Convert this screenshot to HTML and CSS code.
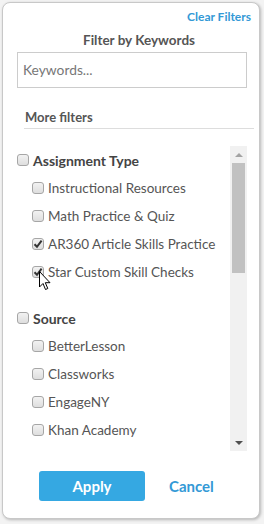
FILE: index.html
```html
<!DOCTYPE html>
<html>
<head>
<meta charset="utf-8">
<link rel="stylesheet" href="styles.css">
</head>
<body>
<div class="modal">
  <div class="clear-row"><a class="link clear">Clear Filters</a></div>
  <div class="title">Filter by Keywords</div>
  <div class="input">Keywords...</div>
  <div class="section">More filters</div>
  <div class="list">
    <div class="list-content">
      <div class="group">
        <div class="row head"><span class="cb"></span>Assignment Type</div>
        <div class="row child"><span class="cb"></span>Instructional Resources</div>
        <div class="row child"><span class="cb"></span>Math Practice &amp; Quiz</div>
        <div class="row child"><span class="cb checked"><svg viewBox="0 0 12 12" width="12" height="12"><path d="M2.5 6.2 L5 8.8 L9.6 2.6" fill="none" stroke="#333" stroke-width="2"/></svg></span>AR360 Article Skills Practice</div>
        <div class="row child"><span class="cb checked"><svg viewBox="0 0 12 12" width="12" height="12"><path d="M2.5 6.2 L5 8.8 L9.6 2.6" fill="none" stroke="#333" stroke-width="2"/></svg></span>Star Custom Skill Checks</div>
      </div>
      <div class="group">
        <div class="row head"><span class="cb"></span>Source</div>
        <div class="row child"><span class="cb"></span>BetterLesson</div>
        <div class="row child"><span class="cb"></span>Classworks</div>
        <div class="row child"><span class="cb"></span>EngageNY</div>
        <div class="row child"><span class="cb"></span>Khan Academy</div>
        <div class="row child"><span class="cb"></span></div>
      </div>
    </div>
    <div class="scrollbar">
      <div class="sb-btn"><span class="arrow up"></span></div>
      <div class="sb-track"><div class="sb-thumb"></div></div>
      <div class="sb-btn"><span class="arrow down"></span></div>
    </div>
  </div>
  <div class="footer">
    <button class="apply">Apply</button>
    <button class="cancel">Cancel</button>
  </div>
</div>
<svg class="cursor" width="13" height="20" viewBox="0 0 13 20"><path d="M0.5 0.5 L0.5 16 L4 12.5 L6.5 18.5 L8.8 17.5 L6.3 11.7 L11 11.7 Z" fill="#fff" stroke="#000" stroke-width="1" stroke-linejoin="miter"/></svg>
</body>
</html>
```
FILE: styles.css
```css
* { box-sizing: border-box; }
html, body { margin: 0; padding: 0; }
body {
  width: 264px;
  height: 524px;
  background: #f3f3f3;
  font-family: Lato, "Liberation Sans", sans-serif;
  position: relative;
  overflow: hidden;
}
.modal {
  margin: 2px 0 0 2px;
  width: 258px;
  height: 517px;
  background: #fff;
  border: 1px solid #c8c8c8;
  border-radius: 8px;
  box-shadow: 1px 1px 3px rgba(0,0,0,0.25);
  display: flex;
  flex-direction: column;
}
.clear-row {
  padding: 4px 8px 0 0;
  text-align: right;
  line-height: 16px;
}
.link {
  color: #3399d6;
  font-weight: 700;
  font-size: 12px;
}
.title {
  margin-top: 6px;
  padding-left: 16px;
  text-align: center;
  font-weight: 700;
  font-size: 13.5px;
  line-height: 18px;
  color: #555;
}
.input {
  margin: 3px 0 0 14px;
  width: 230px;
  height: 36px;
  border: 1px solid #cccccc;
  padding-left: 5px;
  line-height: 34px;
  font-size: 13.8px;
  color: #777;
}
.section {
  margin: 21px 5px 0 21px;
  padding: 0 0 3px 1px;
  line-height: 16px;
  font-weight: 700;
  font-size: 13px;
  color: #555;
  border-bottom: 1px solid #dddddd;
}
.list {
  margin: 17px 0 0 13px;
  width: 231px;
  height: 305px;
  display: flex;
  overflow: hidden;
}
.list-content {
  flex: 1;
  overflow: hidden;
  padding-left: 1px;
}
.group + .group { margin-top: 18px; }
.row {
  height: 28px;
  display: flex;
  align-items: center;
  white-space: nowrap;
}
.row.head {
  font-weight: 700;
  font-size: 14px;
  color: #444;
}
.row.child {
  padding-left: 15px;
  font-size: 13.5px;
  color: #555;
}
.cb {
  width: 12px;
  height: 12px;
  border: 1px solid #a6a6a6;
  border-radius: 3px;
  background: linear-gradient(#f2f2f2, #dedede);
  margin-right: 4px;
  flex: none;
  display: flex;
}
.cb svg { margin: -1px; }
.scrollbar {
  width: 17px;
  flex: none;
  background: #f1f1f1;
  display: flex;
  flex-direction: column;
}
.sb-btn {
  height: 17px;
  display: flex;
  align-items: center;
  justify-content: center;
  flex: none;
}
.arrow {
  width: 0;
  height: 0;
  border-left: 4px solid transparent;
  border-right: 4px solid transparent;
}
.arrow.up { border-bottom: 4px solid #a3a3a3; }
.arrow.down { border-top: 4px solid #505050; }
.sb-track { flex: 1; padding: 0 2px; }
.sb-thumb {
  height: 110px;
  background: #c1c1c1;
}
.footer {
  margin-top: 20px;
  display: flex;
  align-items: center;
  padding-left: 36px;
}
button {
  font-family: Lato, "Liberation Sans", sans-serif;
  font-weight: 700;
  border: none;
  cursor: pointer;
}
.apply {
  width: 106px;
  height: 30px;
  background: #35a8e2;
  color: #fff;
  border-radius: 3px;
  font-size: 15px;
}
.cancel {
  margin-left: 24px;
  padding: 0;
  background: none;
  color: #3399d6;
  font-size: 15px;
}
.cursor {
  position: absolute;
  left: 39px;
  top: 271px;
}
```
